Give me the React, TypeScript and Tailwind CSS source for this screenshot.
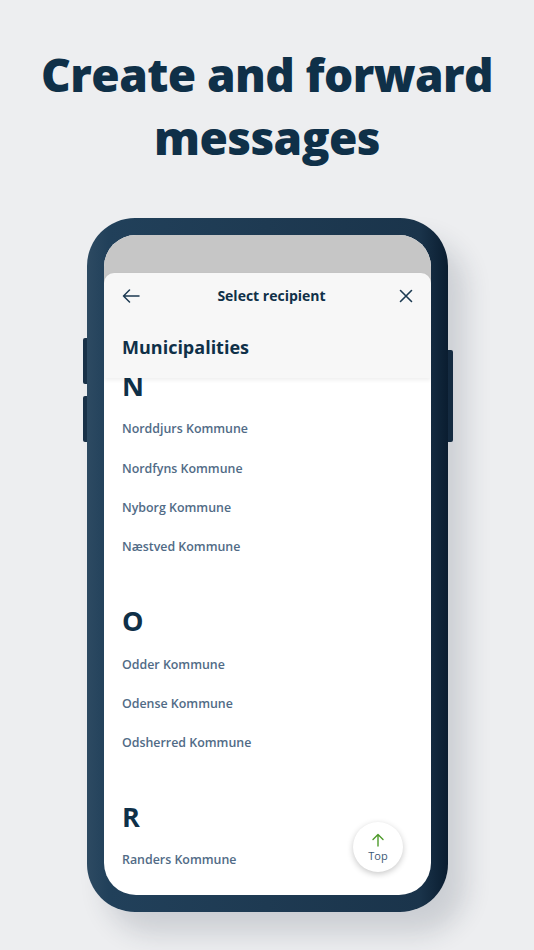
import React from "react";

const sections: { letter: string; items: string[] }[] = [
  { letter: "N", items: ["Norddjurs Kommune", "Nordfyns Kommune", "Nyborg Kommune", "Næstved Kommune"] },
  { letter: "O", items: ["Odder Kommune", "Odense Kommune", "Odsherred Kommune"] },
  { letter: "R", items: ["Randers Kommune"] },
];

export default function App() {
  return (
    <div
      className="w-[534px] h-[950px] overflow-hidden bg-[#edeef0] flex flex-col items-center"
      style={{ fontFamily: '"Open Sans", "Noto Sans", sans-serif' }}
    >
      <h1 className="pt-[43px] text-center text-[46px] leading-[63px] font-extrabold text-[#0f3048] tracking-[-0.6px]">
        Create and forward
        <br />
        messages
      </h1>

      <div className="relative mt-[49px] w-[361px] h-[694px] ml-[1px]">
        {/* side buttons */}
        <div className="absolute left-[-4px] top-[120px] w-[5px] h-[46px] rounded-l-[2px] bg-[#1a3249]" />
        <div className="absolute left-[-4px] top-[178px] w-[5px] h-[46px] rounded-l-[2px] bg-[#1a3249]" />
        <div className="absolute right-[-5px] top-[132px] w-[6px] h-[92px] rounded-r-[2px] bg-[#122a40]" />

        <div className="relative w-full h-full rounded-[48px] p-[17px] bg-[linear-gradient(90deg,#2d4a62_0%,#21405a_6%,#1e3a52_50%,#1a344b_92%,#0a1d30_100%)] shadow-[18px_22px_26px_rgba(40,50,70,0.16)]">
          <div className="w-full h-full rounded-[32px] overflow-hidden bg-white flex flex-col relative">
            <div className="h-[38px] bg-[#c6c6c6] shrink-0" />
            <div className="relative z-10 shrink-0 bg-[#c6c6c6]">
              <div className="rounded-t-[10px] bg-[#f7f7f7] h-[105px] shadow-[0_2px_4px_rgba(0,0,0,0.07)]">
                <div className="h-[46px] flex items-center justify-between px-[18px] text-[#0f3048]">
                  <svg width="18" height="14" viewBox="0 0 18 14" fill="none" stroke="#1c3a52" strokeWidth="1.5" strokeLinecap="round" strokeLinejoin="round">
                    <path d="M17 7H1.5M7.5 1 1.5 7l6 6" />
                  </svg>
                  <span className="text-[14px] font-bold leading-none ml-[4px]">Select recipient</span>
                  <svg width="14" height="14" viewBox="0 0 14 14" fill="none" stroke="#1c3a52" strokeWidth="1.6" strokeLinecap="round">
                    <path d="M1.5 1.5l11 11M12.5 1.5l-11 11" />
                  </svg>
                </div>
                <div className="px-[18px] pt-[16px] text-[18px] font-bold leading-[24px] text-[#0f3048]">Municipalities</div>
              </div>
            </div>

            <div className="flex-1 px-[18px] relative">
              {sections.map((s, i) => (
                <div key={s.letter} className={i === 0 ? "" : "mt-[46px]"}>
                  <div className="h-[16px] leading-[16px] text-[27px] font-bold text-[#0f3048]">{s.letter}</div>
                  <div className="mt-[16px]">
                    {s.items.map((it) => (
                      <div key={it} className="h-[39.3px] flex items-center text-[12.4px] font-semibold text-[#516b86]">
                        {it}
                      </div>
                    ))}
                  </div>
                </div>
              ))}

              <div className="absolute right-[28px] top-[444px] w-[50px] h-[50px] rounded-full bg-white shadow-[0_2px_6px_rgba(0,0,0,0.22)] flex flex-col items-center justify-center">
                <svg width="12" height="14" viewBox="0 0 12 14" fill="none" stroke="#4d9a2a" strokeWidth="1.4" strokeLinecap="round" strokeLinejoin="round">
                  <path d="M6 13V1.5M1 6.5 6 1.5l5 5" />
                </svg>
                <span className="mt-[2px] text-[11px] leading-[13px] font-normal text-[#3d5a75]">Top</span>
              </div>
            </div>
          </div>
        </div>
      </div>
    </div>
  );
}
